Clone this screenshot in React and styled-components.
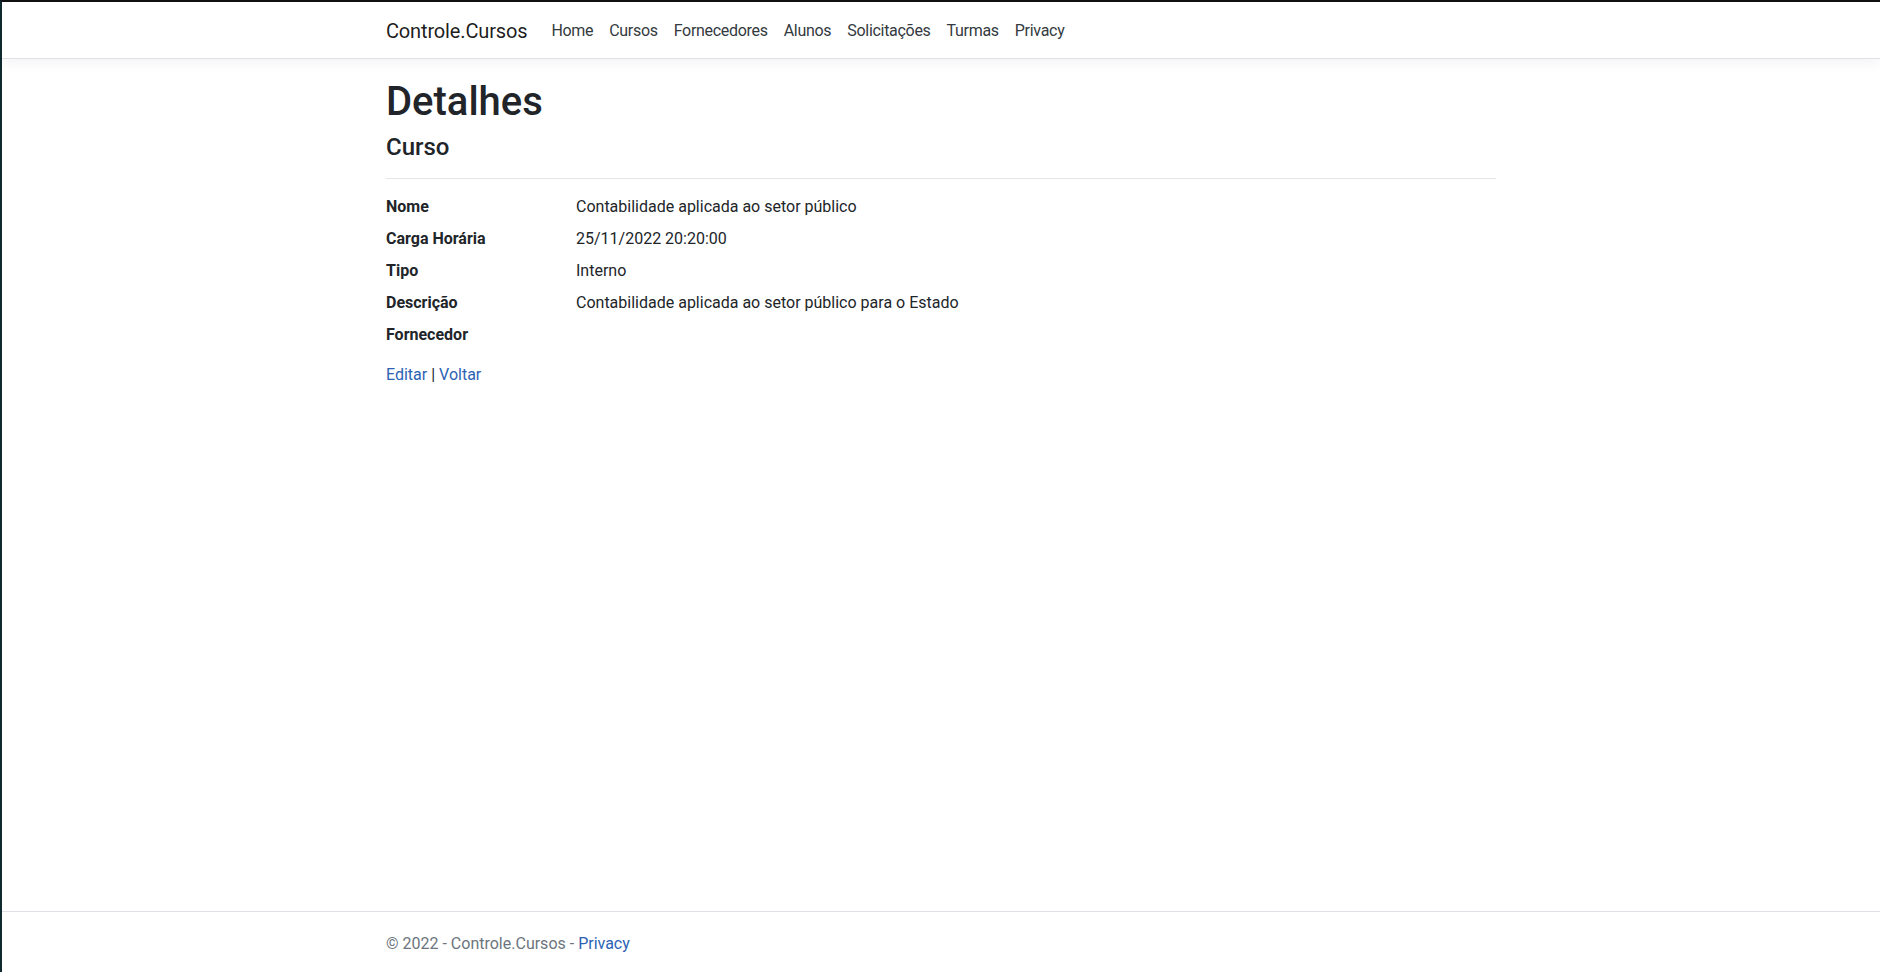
import React from "react";
import styled, { createGlobalStyle } from "styled-components";

const GlobalStyle = createGlobalStyle`
  *, *::before, *::after { box-sizing: border-box; }
  html, body { margin: 0; padding: 0; height: 100%; }
  body {
    font-family: Roboto, "Liberation Sans", sans-serif;
    font-size: 16px;
    line-height: 1.5;
    color: #212529;
    background: #fff;
  }
  #root { min-height: 100%; }
`;

const Frame = styled.div`
  min-height: 100vh;
  display: flex;
  flex-direction: column;
  border-top: 2px solid #111;
  border-left: 2px solid #0f2a2e;
`;

const Navbar = styled.nav`
  background: #fff;
  border-bottom: 1px solid #dee2e6;
  box-shadow: 0 0.25rem 0.75rem rgba(0, 0, 0, 0.05);
  padding: 9px 16px 7px;
  margin-bottom: 16px;
`;

const Container = styled.div`
  width: 100%;
  max-width: 1140px;
  padding: 0 15px;
  margin: 0 auto;
  display: ${(p) => (p.$flex ? "flex" : "block")};
  align-items: center;
`;

const Brand = styled.a`
  font-size: 20px;
  line-height: 30px;
  padding: 5px 0;
  margin-right: 16px;
  color: rgba(0, 0, 0, 0.9);
  text-decoration: none;
  white-space: nowrap;
  letter-spacing: -0.15px;
`;

const NavList = styled.ul`
  display: flex;
  list-style: none;
  margin: 0;
  padding: 0;
`;

const NavLink = styled.a`
  display: block;
  padding: 8px 8px;
  color: #343a40;
  text-decoration: none;
  font-size: 16px;
  line-height: 24px;
  letter-spacing: -0.3px;
`;

const Main = styled.main`
  flex: 1;
  padding-bottom: 16px;
`;

const H1 = styled.h1`
  font-size: 40px;
  font-weight: 500;
  line-height: 1.2;
  margin: 0 0 5px;
  padding-top: 3px;
`;

const H4 = styled.h4`
  font-size: 24px;
  font-weight: 500;
  line-height: 1.2;
  margin: 0 0 4px;
  padding-top: 2px;
`;

const Hr = styled.hr`
  border: 0;
  border-top: 1px solid rgba(0, 0, 0, 0.1);
  margin: 16px 0;
`;

const DetailList = styled.dl`
  display: grid;
  grid-template-columns: 190px 1fr;
  margin: 0 -15px 16px;
`;

const Term = styled.dt`
  font-weight: 700;
  padding: 0 15px;
  margin: 0;
`;

const Desc = styled.dd`
  margin: 0 0 8px;
  padding: 0 15px;
`;

const Link = styled.a`
  color: #2c62b4;
  text-decoration: none;
`;

const Footer = styled.footer`
  border-top: 1px solid #dee2e6;
  line-height: 57px;
  padding-top: 3px;
  color: #6c757d;
  white-space: nowrap;
`;

const navItems = ["Home", "Cursos", "Fornecedores", "Alunos", "Solicitações", "Turmas", "Privacy"];

const details = [
  ["Nome", "Contabilidade aplicada ao setor público"],
  ["Carga Horária", "25/11/2022 20:20:00"],
  ["Tipo", "Interno"],
  ["Descrição", "Contabilidade aplicada ao setor público para o Estado"],
  ["Fornecedor", ""],
];

export default function App() {
  return (
    <>
      <GlobalStyle />
      <Frame>
        <Navbar>
          <Container $flex>
            <Brand href="#">Controle.Cursos</Brand>
            <NavList>
              {navItems.map((n) => (
                <li key={n}>
                  <NavLink href="#">{n}</NavLink>
                </li>
              ))}
            </NavList>
          </Container>
        </Navbar>
        <Main>
          <Container>
            <H1>Detalhes</H1>
            <div>
              <H4>Curso</H4>
              <Hr />
              <DetailList>
                {details.map(([k, v]) => (
                  <React.Fragment key={k}>
                    <Term>{k}</Term>
                    <Desc>{v}</Desc>
                  </React.Fragment>
                ))}
              </DetailList>
            </div>
            <div>
              <Link href="#">Editar</Link> | <Link href="#">Voltar</Link>
            </div>
          </Container>
        </Main>
        <Footer>
          <Container>
            © 2022 - Controle.Cursos - <Link href="#">Privacy</Link>
          </Container>
        </Footer>
      </Frame>
    </>
  );
}
